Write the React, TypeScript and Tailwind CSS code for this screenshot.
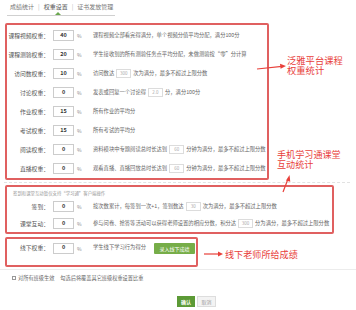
import React from "react";

function Mini({ v }: { v: string }) {
  return (
    <span className="inline-flex items-center justify-center w-[15px] h-[9px] border border-[#dcdcdc] text-[#aaa] text-[4.5px] mx-[2px]">
      {v}
    </span>
  );
}

function Row({
  label,
  value,
  children,
  h = "h-[19px]",
}: {
  label: string;
  value: string;
  children: React.ReactNode;
  h?: string;
}) {
  return (
    <div className={`flex items-center ${h}`}>
      <div className="w-[42px] text-right text-[5.8px] text-[#555] leading-none">{label}</div>
      <div className="ml-[4px] w-[21px] h-[11px] border border-[#ccc] bg-white flex items-center justify-center text-[5.5px] font-bold text-[#333] leading-none">
        {value}
      </div>
      <span className="ml-[3px] w-[16px] text-[5px] text-[#888] leading-none">%</span>
      <div className="flex items-center whitespace-nowrap text-[5.3px] text-[#666] leading-none">{children}</div>
    </div>
  );
}

export default function App() {
  return (
    <div className="relative w-[356px] h-[310px] bg-white overflow-hidden font-['Noto_Sans_CJK_SC',sans-serif]">
      {/* tabs */}
      <div className="pt-[2px] pl-[10px] h-[11px] flex items-center gap-[4px] text-[6px] text-[#777] leading-none">
        <span>成绩统计</span>
        <span className="text-[#bbb]">|</span>
        <span className="text-[#555]">权重设置</span>
        <span className="text-[#bbb]">|</span>
        <span>证书发放管理</span>
      </div>
      <div className="relative ml-[7px] mt-[4px] w-[108px] h-px bg-[#d0d0d0]">
        <div className="absolute left-[48px] -top-[3px] w-0 h-0 border-l-[3px] border-r-[3px] border-b-[3px] border-l-transparent border-r-transparent border-b-[#6aa84f]" />
      </div>

      {/* box 1 */}
      <div className="ml-[5px] mt-[7px] w-[264px] border-2 border-[#e06060] rounded-[2px] pt-[1px]">
        <Row label="课程视频权重：" value="40">
          课程视频全部看完得满分，单个视频分值平均分配，满分100分
        </Row>
        <Row label="课程测验权重：" value="20">
          学生接收到的所有测验任务点平均分配，未做测验按“零”分计算
        </Row>
        <Row label="访问数权重：" value="10">
          访问数达<Mini v="300" />次为满分，最多不超过上限分数
        </Row>
        <Row label="讨论权重：" value="0">
          发表或回复一个讨论得<Mini v="2.0" />分，满分100分
        </Row>
        <Row label="作业权重：" value="15">
          所有作业的平均分
        </Row>
        <Row label="考试权重：" value="15">
          所有考试的平均分
        </Row>
        <Row label="阅读权重：" value="0">
          资料模块中专题阅读总时长达到<Mini v="60" />分钟为满分，最多不超过上限分数
        </Row>
        <Row label="直播权重：" value="0">
          观看直播、直播回放总时长达到<Mini v="60" />分钟为满分，最多不超过上限分数
        </Row>
      </div>

      <div className="mt-[2px] ml-[4px] mr-[6px] border-t border-dashed border-[#e2e2e2]" />

      {/* box 2 */}
      <div className="ml-[5px] mt-[2px] w-[329px] border-2 border-[#e06060] rounded-[2px]">
        <div className="pt-[2px] pl-[6px] h-[10px] flex items-center text-[4.4px] text-[#999] leading-none">
          签到和课堂互动暂仅支持“学习通”客户端操作
        </div>
        <div className="mt-[1px]">
          <Row label="签到：" value="0" h="h-[17px]">
            按次数累计，每签到一次+1，签到数达<Mini v="30" />次为满分，最多不超过上限分数
          </Row>
          <Row label="课堂互动：" value="0" h="h-[17px]">
            参与问卷、抢答等活动可以获得老师设置的相应分数，积分达<Mini v="300" />分为满分，最多不超过上限分数
          </Row>
        </div>
      </div>

      {/* box 3 */}
      <div className="ml-[5px] mt-[3px] w-[193px] border-2 border-[#e06060] rounded-[2px] pt-[2px] pb-[10px]">
        <Row label="线下权重：" value="0" h="h-[14px]">
          <span className="w-[61px]">学生线下学习行为得分</span>
          <span className="inline-flex items-center justify-center w-[41px] h-[11px] bg-[#76ad48] text-white text-[5px] rounded-[1px]">
            录入线下成绩
          </span>
        </Row>
      </div>

      <div className="mt-[2px] border-t border-[#ececec]" />

      {/* checkbox row */}
      <div className="mt-[4px] pl-[12px] h-[8px] flex items-center text-[5.2px] text-[#666] leading-none whitespace-nowrap">
        <span className="w-[4px] h-[4px] border border-[#999] bg-white mr-[2px]" />
        <span>对所有班级生效</span>
        <span className="ml-[6px]">勾选后将覆盖其它班级权重设置比重</span>
      </div>

      {/* buttons */}
      <div className="mt-[14px] ml-[177px] flex gap-[2px]">
        <span className="inline-flex items-center justify-center w-[18px] h-[11px] bg-[#5c9a36] text-white text-[5px] font-bold leading-none">
          确认
        </span>
        <span className="inline-flex items-center justify-center w-[19px] h-[11px] bg-[#f3f3f3] border border-[#ddd] text-[#999] text-[5px] leading-none">
          取消
        </span>
      </div>

      {/* annotations */}
      <div className="absolute left-[287px] top-[55px] flex flex-col text-[9.3px] text-[#e8403a]">
        <div className="h-[10px] leading-[10px]">泛雅平台课程</div>
        <div className="h-[10px] leading-[10px]">权重统计</div>
      </div>
      <div className="absolute left-[277px] top-[149px] flex flex-col text-[9.1px] text-[#e8403a]">
        <div className="h-[10px] leading-[10px]">手机学习通课堂</div>
        <div className="h-[10px] leading-[10px]">互动统计</div>
      </div>
      <div className="absolute left-[225px] top-[249px] text-[9.1px] leading-[10px] text-[#e8403a]">
        线下老师所给成绩
      </div>
      <svg className="absolute left-0 top-0" width="356" height="310" viewBox="0 0 356 310">
        <g stroke="#e8403a" strokeWidth="1.2" fill="#e8403a">
          <line x1="257" y1="69" x2="282" y2="66.3" />
          <polygon points="286,66 280,63.7 280.6,68.7" stroke="none" />
          <line x1="283" y1="192" x2="288" y2="179" />
          <polygon points="289.5,175 286,180.5 290.3,181.8" stroke="none" />
          <line x1="204" y1="254" x2="219" y2="254" />
          <polygon points="223,254 218,251.5 218,256.5" stroke="none" />
        </g>
      </svg>
    </div>
  );
}
